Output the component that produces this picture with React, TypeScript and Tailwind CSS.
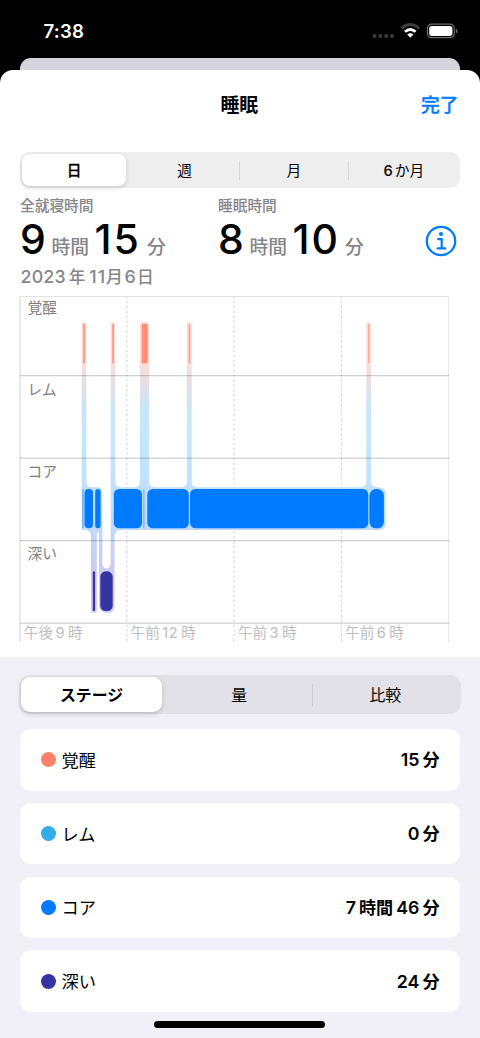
import { useState } from "react";
import clsx from "clsx";

const GRID_Y = [375.7, 458.2, 540.6, 623.2];

const HOUR_TICKS = [
  { x: 20, period: "午後", hour: "9" },
  { x: 126.8, period: "午前", hour: "12" },
  { x: 234.1, period: "午前", hour: "3" },
  { x: 341.4, period: "午前", hour: "6" },
];

const STAGE_LABELS = [
  { label: "覚醒", y: 312.5 },
  { label: "レム", y: 394.5 },
  { label: "コア", y: 477 },
  { label: "深い", y: 559 },
];

const AWAKE_BARS = [
  { x: 83, w: 2, color: "#ff9d8b" },
  { x: 112.1, w: 1.9, color: "#ff9d8b" },
  { x: 141.7, w: 5.8, color: "#ff8a74" },
  { x: 188.7, w: 1.5, color: "#ff9d8b" },
  { x: 368, w: 1.4, color: "#ffa898" },
];

const CORE_BARS = [
  { x: 82.1, w: 1.6, r: 0.6, color: "#6db3fa" },
  { x: 84.5, w: 8.5, r: 4, color: "#007aff" },
  { x: 95.2, w: 5.4, r: 2.7, color: "#007aff" },
  { x: 113.8, w: 28.2, r: 5.5, color: "#007aff" },
  { x: 143.2, w: 1.3, r: 0.6, color: "#6db3fa" },
  { x: 147.3, w: 41.5, r: 5.5, color: "#007aff" },
  { x: 190, w: 178.3, r: 5.5, color: "#007aff" },
  { x: 369.4, w: 14.5, r: 6.5, color: "#007aff" },
];

const DEEP_BARS = [
  { x: 92.8, w: 2.3, r: 1 },
  { x: 100.3, w: 12.4, r: 5.5 },
];

// soft outline that joins neighbouring stages
const HALO = [
  "M81.7 530V324.3Q81.7 322 84 322T86.3 324.3V481Q86.3 487.3 92 487.3",
  "H98.5Q102.4 487.3 102.4 492V562Q102.4 568.4 106.6 568.4T110.7 562",
  "V324.3Q110.7 322 113 322T115.3 324.3V481Q115.3 487.3 121.5 487.3",
  "H134Q140 487.3 140 481V325Q140 322 143 322H146Q149 322 149 325",
  "V481Q149 487.3 155 487.3H181Q187 487.3 187 481V324.3Q187 322 189.4 322",
  "T191.7 324.3V481Q191.7 487.3 197.5 487.3H360Q366.3 487.3 366.3 481",
  "V324.3Q366.3 322 368.6 322T370.9 324.3V481Q371.5 487.3 378 487.3",
  "Q385.7 487.3 385.7 494V523Q385.7 530 379 530H121Q114.5 530 114.5 537",
  "V606Q114.5 613 107 613T99 606V534Q99 532 97.9 532T96.8 534V610.5",
  "Q96.8 613 93.9 613T91 610.5V537Q91 530 85 530Z",
].join("");

function SleepChart() {
  return (
    <svg
      width="440"
      height="347"
      viewBox="20 296 440 347"
      className="block shrink-0 overflow-visible font-['Inter','Noto_Sans_CJK_JP',sans-serif]"
    >
      <defs>
        <linearGradient
          id="halo"
          gradientUnits="userSpaceOnUse"
          x1="0"
          y1="322"
          x2="0"
          y2="613"
        >
          <stop offset="0" stopColor="#ffdcd6" />
          <stop offset="0.13" stopColor="#ffdcd6" />
          <stop offset="0.15" stopColor="#f7dfdc" />
          <stop offset="0.21" stopColor="#e6dfe4" />
          <stop offset="0.29" stopColor="#c9e6f5" />
          <stop offset="0.42" stopColor="#c5e7fb" />
          <stop offset="0.5" stopColor="#c2e2fd" />
          <stop offset="0.7" stopColor="#bfdbfd" />
          <stop offset="0.78" stopColor="#c5d1f2" />
          <stop offset="0.88" stopColor="#cfcbe9" />
          <stop offset="1" stopColor="#d0cdea" />
        </linearGradient>
      </defs>

      <line x1="20" x2="20" y1="296" y2="642" stroke="#dcdcdd" strokeWidth="1.2" />
      {HOUR_TICKS.slice(1).map((t) => (
        <line
          key={t.x}
          x1={t.x}
          x2={t.x}
          y1="296"
          y2="642"
          stroke="#d4d4d5"
          strokeWidth="1.1"
          strokeDasharray="2.4 2.5"
        />
      ))}
      <line x1="448.5" x2="448.5" y1="296" y2="642" stroke="#e9e9ea" />
      <line x1="20" x2="449" y1="296.5" y2="296.5" stroke="#e2e2e3" />

      <path d={HALO} fill="url(#halo)" />

      {GRID_Y.map((y) => (
        <line
          key={y}
          x1="20"
          x2="449"
          y1={y}
          y2={y}
          stroke="#000"
          strokeOpacity="0.19"
          strokeWidth="1.2"
        />
      ))}

      {AWAKE_BARS.map((b) => (
        <rect key={b.x} x={b.x} y="324" width={b.w} height="39.3" fill={b.color} />
      ))}
      <line x1="143.6" x2="143.6" y1="324" y2="363.3" stroke="#ffb0a1" strokeWidth="0.6" />
      {CORE_BARS.map((b) => (
        <rect key={b.x} x={b.x} y="489" width={b.w} height="39.3" rx={b.r} fill={b.color} />
      ))}
      {DEEP_BARS.map((b) => (
        <rect key={b.x} x={b.x} y="571.3" width={b.w} height="39.8" rx={b.r} fill="#3634a3" />
      ))}

      {STAGE_LABELS.map((s) => (
        <text key={s.label} x="27.5" y={s.y} fontSize="14.7" fill="#7f7f84">
          {s.label}
        </text>
      ))}
      {HOUR_TICKS.map((t) => (
        <text key={t.x} x={t.x + 3.8} y="637.7" fontSize="14.6" fill="#bebec0">
          {t.period}
          <tspan dx="2.4" letterSpacing="0.7">
            {t.hour}
          </tspan>
          <tspan dx="2.8">時</tspan>
        </text>
      ))}
    </svg>
  );
}

function StatusBar() {
  return (
    <div className="flex h-[58px] shrink-0 items-start bg-black pl-[43.5px] pr-[21px] pt-[19px] text-white">
      <span className="text-[18.6px] font-semibold leading-6 tracking-[0.2px]">7:38</span>
      <svg width="87" height="16" viewBox="0 0 87 16" className="ml-auto mt-[3.5px]">
        <g fill="#3c3c3d">
          <circle cx="2.6" cy="13" r="2" />
          <circle cx="8.4" cy="13" r="2" />
          <circle cx="14.2" cy="13" r="2" />
          <circle cx="20" cy="13" r="2" />
        </g>
        <path d="M29.5 5.3Q38.3-2.2 47.1 5.3" fill="none" stroke="#3c3c3d" strokeWidth="2.9" />
        <path d="M33 8.8Q38.3 4 43.6 8.8" fill="none" stroke="#fff" strokeWidth="2.9" />
        <path d="M35.2 11.6Q38.3 9 41.4 11.6L38.3 14.8Z" fill="#fff" />
        <rect x="55.4" y="1.2" width="26.8" height="13.5" rx="4.2" fill="none" stroke="#6d6d6e" strokeWidth="1.2" />
        <rect x="57.2" y="3" width="23.2" height="9.9" rx="2.6" fill="#fff" />
        <path d="M83.8 5.7Q85.5 6.3 85.5 8T83.8 10.3Z" fill="#6d6d6e" />
      </svg>
    </div>
  );
}

function Duration({
  label,
  hours,
  minutes,
}: {
  label: string;
  hours: string;
  minutes: string;
}) {
  return (
    <div className="w-[198px] shrink-0 whitespace-nowrap text-[#85858a]">
      <div className="h-[17px] pt-[1px] text-[14.7px] font-medium leading-[17px]">{label}</div>
      <div className="flex h-[50px] items-baseline leading-[50px]">
        <span className="w-[26px] text-[41px] font-medium tracking-[-1px] text-black">
          {hours}
        </span>
        <span className="ml-[5.5px] text-[18.8px] font-medium">時間</span>
        <span className="ml-[5.5px] w-[46px] text-[41px] font-medium tracking-[2px] text-black">
          {minutes}
        </span>
        <span className="ml-[6.5px] text-[18.8px] font-medium">分</span>
      </div>
    </div>
  );
}

const RANGES = ["日", "週", "月", "6か月"];
const VIEWS = ["ステージ", "量", "比較"];

const STAGES = [
  { name: "覚醒", color: "bg-[#ff816a]", value: ["15", "分"] },
  { name: "レム", color: "bg-[#32ade6]", value: ["0", "分"] },
  { name: "コア", color: "bg-[#007aff]", value: ["7", "時間", "46", "分"] },
  { name: "深い", color: "bg-[#3634a3]", value: ["24", "分"] },
];

export default function App() {
  const [range, setRange] = useState(0);
  const [view, setView] = useState(0);

  return (
    <div className="h-[1038px] w-[480px] overflow-hidden bg-white font-['Inter','Noto_Sans_CJK_JP',sans-serif]">
      <div className="flex h-full w-[479.5px] flex-col bg-black">
        <StatusBar />
        <div className="mx-5 h-3 shrink-0 rounded-t-[11px] bg-[#d5d4da]" />

        <div className="flex flex-1 flex-col overflow-hidden rounded-t-[13px] bg-white">
          <header className="grid h-[70px] shrink-0 grid-cols-3 items-center pl-5 pr-[21px] pt-[2px] text-[18.8px] font-bold">
            <h1 className="col-start-2 text-center">睡眠</h1>
            <button className="text-right font-medium text-[#007aff] [-webkit-text-stroke:0.3px_#007aff]">
              完了
            </button>
          </header>

          <div className="mx-5 mt-3 flex h-9 shrink-0 rounded-[10px] bg-[#eeeeee] p-[2px]">
            {RANGES.map((r, i) => (
              <button
                key={r}
                onClick={() => setRange(i)}
                className={clsx(
                  "relative flex items-center justify-center pt-[2px] text-[14.7px]",
                  i === 0 ? "mr-[4px] w-[104px]" : "flex-1",
                  range === i &&
                    "rounded-[8px] bg-white font-medium shadow-[0_2px_5px_rgba(0,0,0,0.15)] [-webkit-text-stroke:0.3px_#000]",
                )}
              >
                {i > 1 && (
                  <span className="absolute left-0 top-[7px] h-[19px] w-px bg-[#d6d6d7]" />
                )}
                {r === "6か月" ? (
                  <span className="pl-[2px]">
                    <span className="mr-[2px] font-medium">6</span>か月
                  </span>
                ) : (
                  r
                )}
              </button>
            ))}
          </div>

          <div className="mt-[9px] flex h-[68px] shrink-0 pl-[20px] pr-[22.5px]">
            <Duration label="全就寝時間" hours="9" minutes="15" />
            <Duration label="睡眠時間" hours="8" minutes="10" />
            <svg width="32" height="32" viewBox="0 0 32 32" className="ml-auto mt-[28px] shrink-0">
              <circle cx="16" cy="16" r="14.2" fill="none" stroke="#007aff" strokeWidth="2.3" />
              <circle cx="16" cy="9" r="2.1" fill="#007aff" />
              <path
                d="M13.2 14.2H16.7V23.4M12.6 23.4H20.2"
                fill="none"
                stroke="#007aff"
                strokeWidth="2.2"
                strokeLinecap="round"
                strokeLinejoin="round"
              />
            </svg>
          </div>
          <div className="ml-[20.5px] flex h-[31px] shrink-0 items-baseline text-[17.8px] font-medium leading-6 text-[#85858a]">
            <span className="tracking-[0.2px]">2023</span>
            <span className="ml-[3px] text-[16.5px]">年</span>
            <span className="ml-[4px] tracking-[1px]">11</span>
            <span className="text-[16.8px]">月</span>
            <span className="mx-[1.5px]">6</span>
            <span className="text-[16.8px]">日</span>
          </div>

          <div className="ml-5 h-[361px] shrink-0">
            <SleepChart />
          </div>

          <div className="flex flex-1 flex-col bg-[#f1f0f6] pt-[18px]">
            <div className="mx-[19px] flex h-[39px] shrink-0 rounded-[11px] bg-[#e2e1e7] p-[2px]">
              {VIEWS.map((v, i) => (
                <button
                  key={v}
                  onClick={() => setView(i)}
                  className={clsx(
                    "relative flex items-center justify-center pt-[2px] text-[15.9px]",
                    i === 0 ? "mr-[4px] w-[141px]" : "flex-1",
                    view === i &&
                      "rounded-[9px] bg-white font-bold shadow-[0_2px_5px_rgba(0,0,0,0.18)]",
                  )}
                >
                  {i > 1 && (
                    <span className="absolute left-0 top-[7px] h-[22px] w-px bg-[#cccbd1]" />
                  )}
                  {v}
                </button>
              ))}
            </div>

            <ul className="mx-5 mt-[15px] flex flex-col gap-[12.3px]">
              {STAGES.map((s) => (
                <li
                  key={s.name}
                  className="flex h-[61.5px] items-center rounded-[11px] bg-white pl-[20.5px] pr-[20px]"
                >
                  <span className={clsx("size-[15px] rounded-full", s.color)} />
                  <span className="ml-[6px] pt-[2px] text-[17.2px]">{s.name}</span>
                  <span className="ml-auto flex items-baseline gap-[3px] pt-[2px] text-[17.1px] font-semibold">
                    {s.value.map((part) => (
                      <span key={part} className={clsx(/\d/.test(part) && "text-[17.8px]")}>
                        {part}
                      </span>
                    ))}
                  </span>
                </li>
              ))}
            </ul>

            <div className="mx-auto mt-[9.5px] h-[6.5px] w-[171px] rounded-full bg-black" />
          </div>
        </div>
      </div>
    </div>
  );
}
